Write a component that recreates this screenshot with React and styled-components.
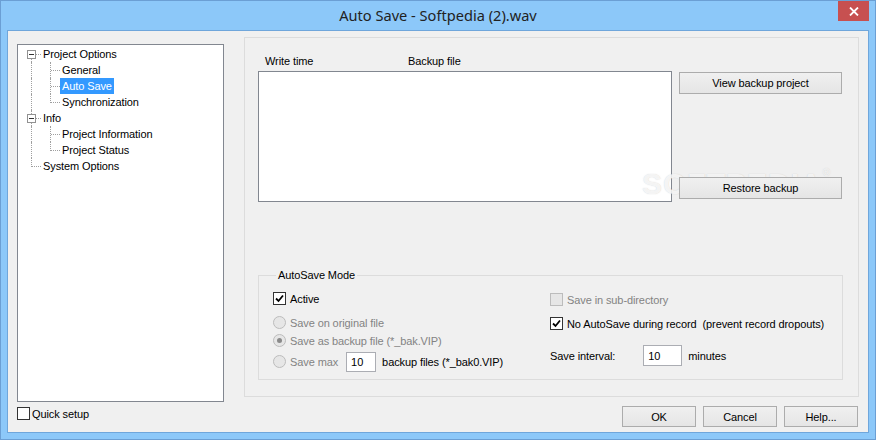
import styled, { createGlobalStyle } from "styled-components";

const Global = createGlobalStyle`
  html, body { margin: 0; padding: 0; background: #fff; }
  * { box-sizing: border-box; }
  body {
    font-family: "Liberation Sans", Arial, sans-serif;
    font-size: 11px;
    letter-spacing: -0.1px;
    color: #000;
  }
`;

const Window = styled.div`
  width: 876px;
  height: 440px;
  background: #8cc8f9;
  border: 1px solid #6b9fd4;
  display: flex;
  flex-direction: column;
`;

const TitleBar = styled.div`
  position: relative;
  height: 29px;
  flex: none;
  display: flex;
  align-items: center;
  justify-content: center;
  font-family: "Noto Sans", "Open Sans", sans-serif;
  font-size: 14.6px;
  letter-spacing: 0;
  color: #222;
  padding-bottom: 1px;
`;

const CloseBtn = styled.div`
  position: absolute;
  top: 0;
  right: 6px;
  width: 31px;
  height: 20px;
  background: #c75050;
  display: flex;
  align-items: center;
  justify-content: center;
`;

const Client = styled.div`
  flex: 1;
  margin: 0 6px 6px;
  border: 1px solid #6fa6db;
  background: #f0f0f0;
  display: flex;
`;

const LeftCol = styled.div`
  width: 216px;
  padding-left: 9px;
  display: flex;
  flex-direction: column;
`;

const TreeBox = styled.div`
  margin-top: 13px;
  height: 358px;
  background: #fff;
  border: 1px solid #828790;
  padding: 1px 0 0 4px;
`;

const TreeRow = styled.div`
  height: 16px;
  display: flex;
  align-items: center;
`;

const Guide = styled.span`
  position: relative;
  width: 19px;
  height: 16px;
  flex: none;
  &::before {
    content: "";
    position: absolute;
    left: 9px;
    top: ${(p) => (p.$v === "bottom" ? "9px" : "0")};
    height: ${(p) => (p.$v === "top" ? "9px" : p.$v === "bottom" ? "7px" : "16px")};
    border-left: 1px dotted #a0a0a0;
  }
  &::after {
    content: "";
    position: absolute;
    left: 10px;
    width: ${(p) => (p.$h ? "9px" : "0")};
    top: 8px;
    border-top: ${(p) => (p.$h ? "1px dotted #a0a0a0" : "none")};
  }
`;

const Expander = styled.span`
  position: absolute;
  left: 5px;
  top: 4px;
  width: 9px;
  height: 9px;
  border: 1px solid #919191;
  background: #fff;
  z-index: 1;
  &::after {
    content: "";
    position: absolute;
    left: 1px;
    top: 3px;
    width: 5px;
    height: 1px;
    background: #333;
  }
`;

const TreeLabel = styled.span`
  padding: 0 2px;
  height: 16px;
  line-height: 16px;
  white-space: nowrap;
  background: ${(p) => (p.$selected ? "#3399ff" : "transparent")};
  color: ${(p) => (p.$selected ? "#fff" : "#000")};
`;

const QuickRow = styled.label`
  margin-top: 5px;
  display: flex;
  align-items: center;
`;

const RightCol = styled.div`
  margin-left: 20px;
  width: 615px;
  display: flex;
  flex-direction: column;
`;

const Panel = styled.div`
  position: relative;
  margin-top: 6px;
  height: 360px;
  border: 1px solid #dcdcdc;
  padding: 17px 15px 0 13px;
`;

const TopRow = styled.div`
  display: flex;
`;

const ListCol = styled.div`
  width: 414px;
`;

const Headers = styled.div`
  height: 13px;
  line-height: 13px;
  display: flex;
  padding-left: 7px;
`;

const HeaderCell = styled.span`
  width: ${(p) => p.$w}px;
`;

const ListBox = styled.div`
  margin-top: 3px;
  height: 131px;
  background: #fff;
  border: 1px solid #828790;
`;

const ButtonCol = styled.div`
  margin-left: 7px;
  padding-top: 17px;
  display: flex;
  flex-direction: column;
  gap: 83px;
`;

const Button = styled.button`
  position: relative;
  z-index: 1;
  width: ${(p) => p.$w || 74}px;
  height: ${(p) => p.$h || 21}px;
  border: 1px solid #acacac;
  background: linear-gradient(#f0f0f0, #e5e5e5);
  font-family: "Liberation Sans", Arial, sans-serif;
  font-size: 11px;
  letter-spacing: -0.1px;
  color: #000;
  padding: 0;
`;

const Group = styled.fieldset`
  margin: 67px 0 0;
  width: 585px;
  height: 111px;
  border: 1px solid #dcdcdc;
  padding: 0 0 0 14px;
  display: grid;
  grid-template-columns: 277px 1fr;
`;

const Legend = styled.legend`
  margin-left: 3px;
  padding: 0 2px;
  line-height: 13px;
  color: #000;
`;

const Column = styled.div`
  display: flex;
  flex-direction: column;
`;

const OptionRow = styled.div`
  display: flex;
  align-items: center;
  height: ${(p) => p.$h || 17}px;
  margin-top: ${(p) => p.$top || 0}px;
  color: ${(p) => (p.$disabled ? "#838383" : "#000")};
  white-space: pre;
`;

const Box = styled.span`
  width: 13px;
  height: 13px;
  flex: none;
  margin-right: ${(p) => p.$gap ?? 4}px;
  border: 1px solid ${(p) => (p.$disabled ? "#bcbcbc" : "#333")};
  background: ${(p) => (p.$disabled ? "#e6e6e6" : "#fff")};
  display: flex;
  align-items: center;
  justify-content: center;
`;

const Radio = styled.span`
  width: 13px;
  height: 13px;
  flex: none;
  margin-right: 4px;
  border-radius: 50%;
  border: 1px solid #bcbcbc;
  background: #e6e6e6;
  display: flex;
  align-items: center;
  justify-content: center;
  &::after {
    content: "";
    width: 5px;
    height: 5px;
    border-radius: 50%;
    background: ${(p) => (p.$on ? "#8a8a8a" : "transparent")};
  }
`;

const Field = styled.span`
  width: ${(p) => p.$w}px;
  height: ${(p) => p.$h}px;
  margin: 0 ${(p) => p.$right}px 0 ${(p) => p.$left}px;
  border: 1px solid #abadb3;
  background: #fff;
  color: #000;
  padding-left: 4px;
  display: flex;
  align-items: center;
`;

const Enabled = styled.span`
  color: #000;
`;

const BottomRow = styled.div`
  margin-top: 9px;
  padding-right: 1px;
  display: flex;
  justify-content: flex-end;
  gap: 7px;
`;

const Watermark = styled.div`
  position: absolute;
  left: 397px;
  top: 129px;
  font-family: "Liberation Sans", Arial, sans-serif;
  font-weight: bold;
  font-size: 30px;
  letter-spacing: 1px;
  color: rgba(255, 255, 255, 0.8);
  text-shadow: 0 0 1px rgba(160, 160, 160, 0.5);
  pointer-events: none;
  sup { font-size: 10px; font-weight: normal; vertical-align: top; }
`;

const Check = () => (
  <svg width="9" height="9" viewBox="0 0 9 9">
    <path d="M1 4.5 L3.5 7 L8 1.5" fill="none" stroke="#000" strokeWidth="1.8" />
  </svg>
);

const tree = [
  { label: "Project Options", a: "bottom", box: true },
  { label: "General", a: "full", b: "full" },
  { label: "Auto Save", a: "full", b: "full", selected: true },
  { label: "Synchronization", a: "full", b: "top" },
  { label: "Info", a: "full", box: true },
  { label: "Project Information", a: "full", b: "full" },
  { label: "Project Status", a: "full", b: "top" },
  { label: "System Options", a: "top" },
];

export default function App() {
  return (
    <>
      <Global />
      <Window>
        <TitleBar>
          Auto Save - Softpedia (2).wav
          <CloseBtn>
            <svg width="10" height="9" viewBox="0 0 10 9">
              <path d="M1 0.5 L9 8.5 M9 0.5 L1 8.5" stroke="#fff" strokeWidth="1.8" />
            </svg>
          </CloseBtn>
        </TitleBar>
        <Client>
          <LeftCol>
            <TreeBox>
              {tree.map((n) => (
                <TreeRow key={n.label}>
                  <Guide $v={n.a} $h={!n.b}>{n.box && <Expander />}</Guide>
                  {n.b && <Guide $v={n.b} $h />}
                  <TreeLabel $selected={n.selected}>{n.label}</TreeLabel>
                </TreeRow>
              ))}
            </TreeBox>
            <QuickRow>
              <Box $gap={2} />
              Quick setup
            </QuickRow>
          </LeftCol>
          <RightCol>
            <Panel>
              <TopRow>
                <ListCol>
                  <Headers>
                    <HeaderCell $w={143}>Write time</HeaderCell>
                    <HeaderCell $w={100}>Backup file</HeaderCell>
                  </Headers>
                  <ListBox />
                </ListCol>
                <ButtonCol>
                  <Button $w={163} $h={22}>View backup project</Button>
                  <Button $w={163} $h={22}>Restore backup</Button>
                </ButtonCol>
              </TopRow>
              <Group>
                <Legend>AutoSave Mode</Legend>
                <Column>
                  <OptionRow $top={8}>
                    <Box><Check /></Box>Active
                  </OptionRow>
                  <OptionRow $top={7} $disabled>
                    <Radio />Save on original file
                  </OptionRow>
                  <OptionRow $top={1} $disabled>
                    <Radio $on />Save as backup file (*_bak.VIP)
                  </OptionRow>
                  <OptionRow $top={2} $h={21} $disabled>
                    <Radio />Save max
                    <Field $w={30} $h={20} $left={8} $right={6}>10</Field>
                    <Enabled>backup files (*_bak0.VIP)</Enabled>
                  </OptionRow>
                </Column>
                <Column>
                  <OptionRow $top={9} $disabled>
                    <Box $disabled />Save in sub-directory
                  </OptionRow>
                  <OptionRow $top={7}>
                    <Box><Check /></Box>No AutoSave during record  (prevent record dropouts)
                  </OptionRow>
                  <OptionRow $top={13} $h={21}>
                    Save interval:
                    <Field $w={39} $h={21} $left={28} $right={6}>10</Field>
                    minutes
                  </OptionRow>
                </Column>
              </Group>
              <Watermark>SOFTPEDIA<sup>®</sup></Watermark>
            </Panel>
            <BottomRow>
              <Button>OK</Button>
              <Button>Cancel</Button>
              <Button>Help...</Button>
            </BottomRow>
          </RightCol>
        </Client>
      </Window>
    </>
  );
}
